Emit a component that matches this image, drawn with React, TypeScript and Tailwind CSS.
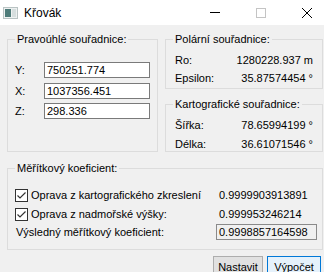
import type { ReactNode } from 'react'

function GroupBox({
  title,
  className = '',
  children,
}: {
  title: string
  className?: string
  children: ReactNode
}) {
  return (
    <fieldset className={`border border-[#dcdcdc] ${className}`}>
      <legend className="ml-[7px] px-[2px] leading-[13px]">{title}</legend>
      {children}
    </fieldset>
  )
}

function TextBox({ value }: { value: string }) {
  return (
    <div className="flex h-[16px] w-[106px] items-center border border-[#7a7a7a] bg-white pl-[2px] leading-[14px]">
      {value}
    </div>
  )
}

function Checkbox() {
  return (
    <span className="grid h-[13px] w-[13px] shrink-0 place-items-center border border-[#333333] bg-white">
      <svg width="11" height="11" viewBox="0 0 11 11" fill="none">
        <path d="M1.5 5.5 L4 8 L9.5 2.5" stroke="#333333" strokeWidth="1.2" />
      </svg>
    </span>
  )
}

function ValueRow({ label, value }: { label: string; value: string }) {
  return (
    <div className="flex h-[14px] items-center justify-between">
      <span>{label}</span>
      <span>{value}</span>
    </div>
  )
}

export default function App() {
  return (
    <div className="h-[272px] w-[324px] overflow-hidden bg-[#f0f0f0] font-['Liberation_Sans',Arial,sans-serif] text-[11px] text-black">
      <div className="w-[330px]">
        {/* title bar */}
        <div className="flex h-[25px] items-center bg-white">
          <svg className="ml-[3px]" width="15" height="12" viewBox="0 0 15 12">
            <rect x="0.5" y="0.5" width="14" height="11" fill="#eef1f1" stroke="#b9c3c3" />
            <rect x="2" y="2" width="6" height="8" fill="#4d7b79" />
            <rect x="9" y="2" width="4" height="8" fill="#d6dede" />
          </svg>
          <span className="ml-[6px] font-['Liberation_Sans',Arial,sans-serif] text-[12px]">Křovák</span>
          <div className="flex-1" />
          <div className="grid h-full w-[46px] place-items-center">
            <span className="h-px w-[10px] bg-black" />
          </div>
          <div className="grid h-full w-[46px] place-items-center">
            <span className="h-[10px] w-[10px] border border-[#c4c4c4]" />
          </div>
          <div className="grid h-full w-[46px] place-items-center">
            <svg width="10" height="10" viewBox="0 0 10 10">
              <path d="M0 0 L10 10 M10 0 L0 10" stroke="#000" strokeWidth="1" />
            </svg>
          </div>
        </div>

        {/* body */}
        <div className="flex flex-col px-[7px] pt-[8px]">
          <div className="flex gap-[7px]">
            <GroupBox title="Pravoúhlé souřadnice:" className="h-[119px] w-[151px]">
              <div className="mt-[16px] flex flex-col gap-[4px] pl-[7px]">
                {[
                  ['Y:', '750251.774'],
                  ['X:', '1037356.451'],
                  ['Z:', '298.336'],
                ].map(([label, value]) => (
                  <div key={label} className="flex items-center">
                    <span className="w-[29px]">{label}</span>
                    <TextBox value={value} />
                  </div>
                ))}
              </div>
            </GroupBox>

            <div className="flex w-[158px] flex-col">
              <GroupBox title="Polární souřadnice:" className="h-[56px]">
                <div className="mt-[7px] flex flex-col gap-[4px] pl-[9px] pr-[9px]">
                  <ValueRow label="Ro:" value="1280228.937 m" />
                  <ValueRow label="Epsilon:" value="35.87574454 °" />
                </div>
              </GroupBox>
              <GroupBox title="Kartografické souřadnice:" className="mt-[9px] h-[54px]">
                <div className="mt-[7px] flex flex-col gap-[5px] pl-[9px] pr-[9px]">
                  <ValueRow label="Šířka:" value="78.65994199 °" />
                  <ValueRow label="Délka:" value="36.61071546 °" />
                </div>
              </GroupBox>
            </div>
          </div>

          <GroupBox title="Měřítkový koeficient:" className="mt-[10px] h-[88px]">
            <div className="mt-[13px] grid grid-cols-[201px_101px] pl-[7px]">
              <div className="flex h-[14px] items-center gap-[3px]">
                <Checkbox />
                <span>Oprava z kartografického zkreslení</span>
              </div>
              <span className="flex h-[14px] items-center pl-[3px]">0.9999903913891</span>

              <div className="mt-[5px] flex h-[14px] items-center gap-[3px]">
                <Checkbox />
                <span>Oprava z nadmořské výšky:</span>
              </div>
              <span className="mt-[5px] flex h-[14px] items-center pl-[3px]">0.999953246214</span>

              <div className="mt-[3px] flex h-[16px] items-center pl-[1px]">
                Výsledný měřítkový koeficient:
              </div>
              <div className="mt-[3px] flex h-[16px] items-center border border-[#8a8a8a] bg-[#f0f0f0] pl-[2px]">
                0.9998857164598
              </div>
            </div>
          </GroupBox>

          <div className="mt-[6px] flex justify-end gap-[4px] pr-[2px]">
            <button className="h-[23px] w-[50px] border border-[#adadad] bg-[#e1e1e1]">Nastavit</button>
            <button className="h-[23px] w-[54px] border border-[#0078d7] bg-[#e5f1fb]">Výpočet</button>
          </div>
        </div>
      </div>
    </div>
  )
}
